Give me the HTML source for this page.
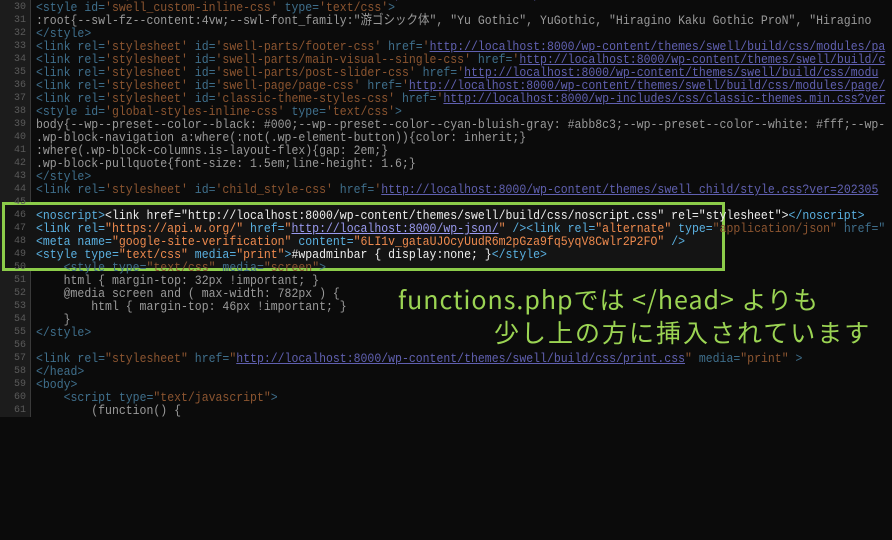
<!DOCTYPE html>
<html><head><meta charset="utf-8"><style>
html,body{margin:0;padding:0;background:#0b0b0b;width:892px;height:417px;overflow:hidden}
.g{position:absolute;left:0;top:0;width:30px;height:417px;background:#1c1c1c;border-right:1px solid #3a3a3a}
.code{position:absolute;left:0;top:0;font-family:"Liberation Mono","Noto Sans CJK JP",monospace;font-size:13px;white-space:pre}
.l{position:absolute;left:0;height:13px;line-height:13px}
.n{position:absolute;left:0;width:26px;text-align:right;color:#5a5a5a;font-size:10px}
.t{position:absolute;left:36px;color:#9a9a9a;transform:scaleX(0.885);transform-origin:0 0}
.k{color:#3f6f8c}.v{color:#8c5530}.u{color:#6060b0;text-decoration:underline}
.box{position:absolute;left:2px;top:202px;width:717px;height:63px;border:3px solid #8ccc4a;background:#141414}
.b .t{color:#eee}.b .k{color:#5ab0e0}.b .v{color:#ee8a4e}.b .u{color:#9a9af0}
.hw{position:absolute;color:#9bd453;font-family:"WenQuanYi Zen Hei","Noto Sans CJK JP",sans-serif;font-size:25px;white-space:nowrap;letter-spacing:1px}
</style></head><body>
<div class="g"></div>
<div class="box"></div>
<div class="code">
<div class="l" style="top:-12px"><span class="n">29</span><span class="t"><span class="k">&lt;link rel=</span><span class="v">'stylesheet'</span><span class="k"> id=</span><span class="v">'swell-main-css'</span><span class="k"> href=</span><span class="u">'http://localhost:8000/wp-content/themes/swell/build/css/main.css'</span></span></div>
<div class="l" style="top:1px"><span class="n">30</span><span class="t"><span class="k">&lt;style id=</span><span class="v">'swell_custom-inline-css'</span><span class="k"> type=</span><span class="v">'text/css'</span><span class="k">&gt;</span></span></div>
<div class="l" style="top:14px"><span class="n">31</span><span class="t">:root{--swl-fz--content:4vw;--swl-font_family:"游ゴシック体", "Yu Gothic", YuGothic, "Hiragino Kaku Gothic ProN", "Hiragino</span></div>
<div class="l" style="top:27px"><span class="n">32</span><span class="t"><span class="k">&lt;/style&gt;</span></span></div>
<div class="l" style="top:40px"><span class="n">33</span><span class="t"><span class="k">&lt;link rel=</span><span class="v">'stylesheet'</span><span class="k"> id=</span><span class="v">'swell-parts/footer-css'</span><span class="k"> href=</span><span class="v">'</span><span class="u">http://localhost:8000/wp-content/themes/swell/build/css/modules/pa</span></span></div>
<div class="l" style="top:53px"><span class="n">34</span><span class="t"><span class="k">&lt;link rel=</span><span class="v">'stylesheet'</span><span class="k"> id=</span><span class="v">'swell-parts/main-visual--single-css'</span><span class="k"> href=</span><span class="v">'</span><span class="u">http://localhost:8000/wp-content/themes/swell/build/c</span></span></div>
<div class="l" style="top:66px"><span class="n">35</span><span class="t"><span class="k">&lt;link rel=</span><span class="v">'stylesheet'</span><span class="k"> id=</span><span class="v">'swell-parts/post-slider-css'</span><span class="k"> href=</span><span class="v">'</span><span class="u">http://localhost:8000/wp-content/themes/swell/build/css/modu</span></span></div>
<div class="l" style="top:79px"><span class="n">36</span><span class="t"><span class="k">&lt;link rel=</span><span class="v">'stylesheet'</span><span class="k"> id=</span><span class="v">'swell-page/page-css'</span><span class="k"> href=</span><span class="v">'</span><span class="u">http://localhost:8000/wp-content/themes/swell/build/css/modules/page/</span></span></div>
<div class="l" style="top:92px"><span class="n">37</span><span class="t"><span class="k">&lt;link rel=</span><span class="v">'stylesheet'</span><span class="k"> id=</span><span class="v">'classic-theme-styles-css'</span><span class="k"> href=</span><span class="v">'</span><span class="u">http://localhost:8000/wp-includes/css/classic-themes.min.css?ver</span></span></div>
<div class="l" style="top:105px"><span class="n">38</span><span class="t"><span class="k">&lt;style id=</span><span class="v">'global-styles-inline-css'</span><span class="k"> type=</span><span class="v">'text/css'</span><span class="k">&gt;</span></span></div>
<div class="l" style="top:118px"><span class="n">39</span><span class="t">body{--wp--preset--color--black: #000;--wp--preset--color--cyan-bluish-gray: #abb8c3;--wp--preset--color--white: #fff;--wp-</span></div>
<div class="l" style="top:131px"><span class="n">40</span><span class="t">.wp-block-navigation a:where(:not(.wp-element-button)){color: inherit;}</span></div>
<div class="l" style="top:144px"><span class="n">41</span><span class="t">:where(.wp-block-columns.is-layout-flex){gap: 2em;}</span></div>
<div class="l" style="top:157px"><span class="n">42</span><span class="t">.wp-block-pullquote{font-size: 1.5em;line-height: 1.6;}</span></div>
<div class="l" style="top:170px"><span class="n">43</span><span class="t"><span class="k">&lt;/style&gt;</span></span></div>
<div class="l" style="top:183px"><span class="n">44</span><span class="t"><span class="k">&lt;link rel=</span><span class="v">'stylesheet'</span><span class="k"> id=</span><span class="v">'child_style-css'</span><span class="k"> href=</span><span class="v">'</span><span class="u">http://localhost:8000/wp-content/themes/swell child/style.css?ver=202305</span></span></div>
<div class="l" style="top:196px"><span class="n">45</span></div>
<div class="b">
<div class="l" style="top:209px"><span class="n">46</span><span class="t"><span class="k">&lt;noscript&gt;</span>&lt;link href="http://localhost:8000/wp-content/themes/swell/build/css/noscript.css" rel="stylesheet"&gt;<span class="k">&lt;/noscript&gt;</span></span></div>
<div class="l" style="top:222px"><span class="n">47</span><span class="t"><span class="k">&lt;link rel=</span><span class="v">"https://api.w.org/"</span><span class="k"> href=</span><span class="v">"</span><span class="u">http://localhost:8000/wp-json/</span><span class="v">"</span><span class="k"> /&gt;&lt;link rel=</span><span class="v">"alternate"</span><span class="k"> type=</span><span class="v" style="color:#8c5530">"application/json"</span><span class="k" style="color:#3f6f8c"> href="</span></span></div>
<div class="l" style="top:235px"><span class="n">48</span><span class="t"><span class="k">&lt;meta name=</span><span class="v">"google-site-verification"</span><span class="k"> content=</span><span class="v">"6LI1v_gataUJOcyUudR6m2pGza9fq5yqV8Cwlr2P2FO"</span><span class="k"> /&gt;</span></span></div>
<div class="l" style="top:248px"><span class="n">49</span><span class="t"><span class="k">&lt;style type=</span><span class="v">"text/css"</span><span class="k"> media=</span><span class="v">"print"</span><span class="k">&gt;</span>#wpadminbar { display:none; }<span class="k">&lt;/style&gt;</span></span></div>
</div>
<div class="l" style="top:261px"><span class="n">50</span><span class="t">    <span class="k">&lt;style type=</span><span class="v">"text/css"</span><span class="k"> media=</span><span class="v">"screen"</span><span class="k">&gt;</span></span></div>
<div class="l" style="top:274px"><span class="n">51</span><span class="t">    html { margin-top: 32px !important; }</span></div>
<div class="l" style="top:287px"><span class="n">52</span><span class="t">    @media screen and ( max-width: 782px ) {</span></div>
<div class="l" style="top:300px"><span class="n">53</span><span class="t">        html { margin-top: 46px !important; }</span></div>
<div class="l" style="top:313px"><span class="n">54</span><span class="t">    }</span></div>
<div class="l" style="top:326px"><span class="n">55</span><span class="t"><span class="k">&lt;/style&gt;</span></span></div>
<div class="l" style="top:339px"><span class="n">56</span></div>
<div class="l" style="top:352px"><span class="n">57</span><span class="t"><span class="k">&lt;link rel=</span><span class="v">"stylesheet"</span><span class="k"> href=</span><span class="v">"</span><span class="u">http://localhost:8000/wp-content/themes/swell/build/css/print.css</span><span class="v">"</span><span class="k"> media=</span><span class="v">"print"</span><span class="k"> &gt;</span></span></div>
<div class="l" style="top:365px"><span class="n">58</span><span class="t"><span class="k">&lt;/head&gt;</span></span></div>
<div class="l" style="top:378px"><span class="n">59</span><span class="t"><span class="k">&lt;body&gt;</span></span></div>
<div class="l" style="top:391px"><span class="n">60</span><span class="t">    <span class="k">&lt;script type=</span><span class="v">"text/javascript"</span><span class="k">&gt;</span></span></div>
<div class="l" style="top:404px"><span class="n">61</span><span class="t">        (function() {</span></div>
</div>
<div class="hw" style="left:398px;top:281px">functions.phpでは &lt;/head&gt; よりも</div>
<div class="hw" style="left:494px;top:314px;letter-spacing:2px">少し上の方に挿入されています</div>
</body></html>
